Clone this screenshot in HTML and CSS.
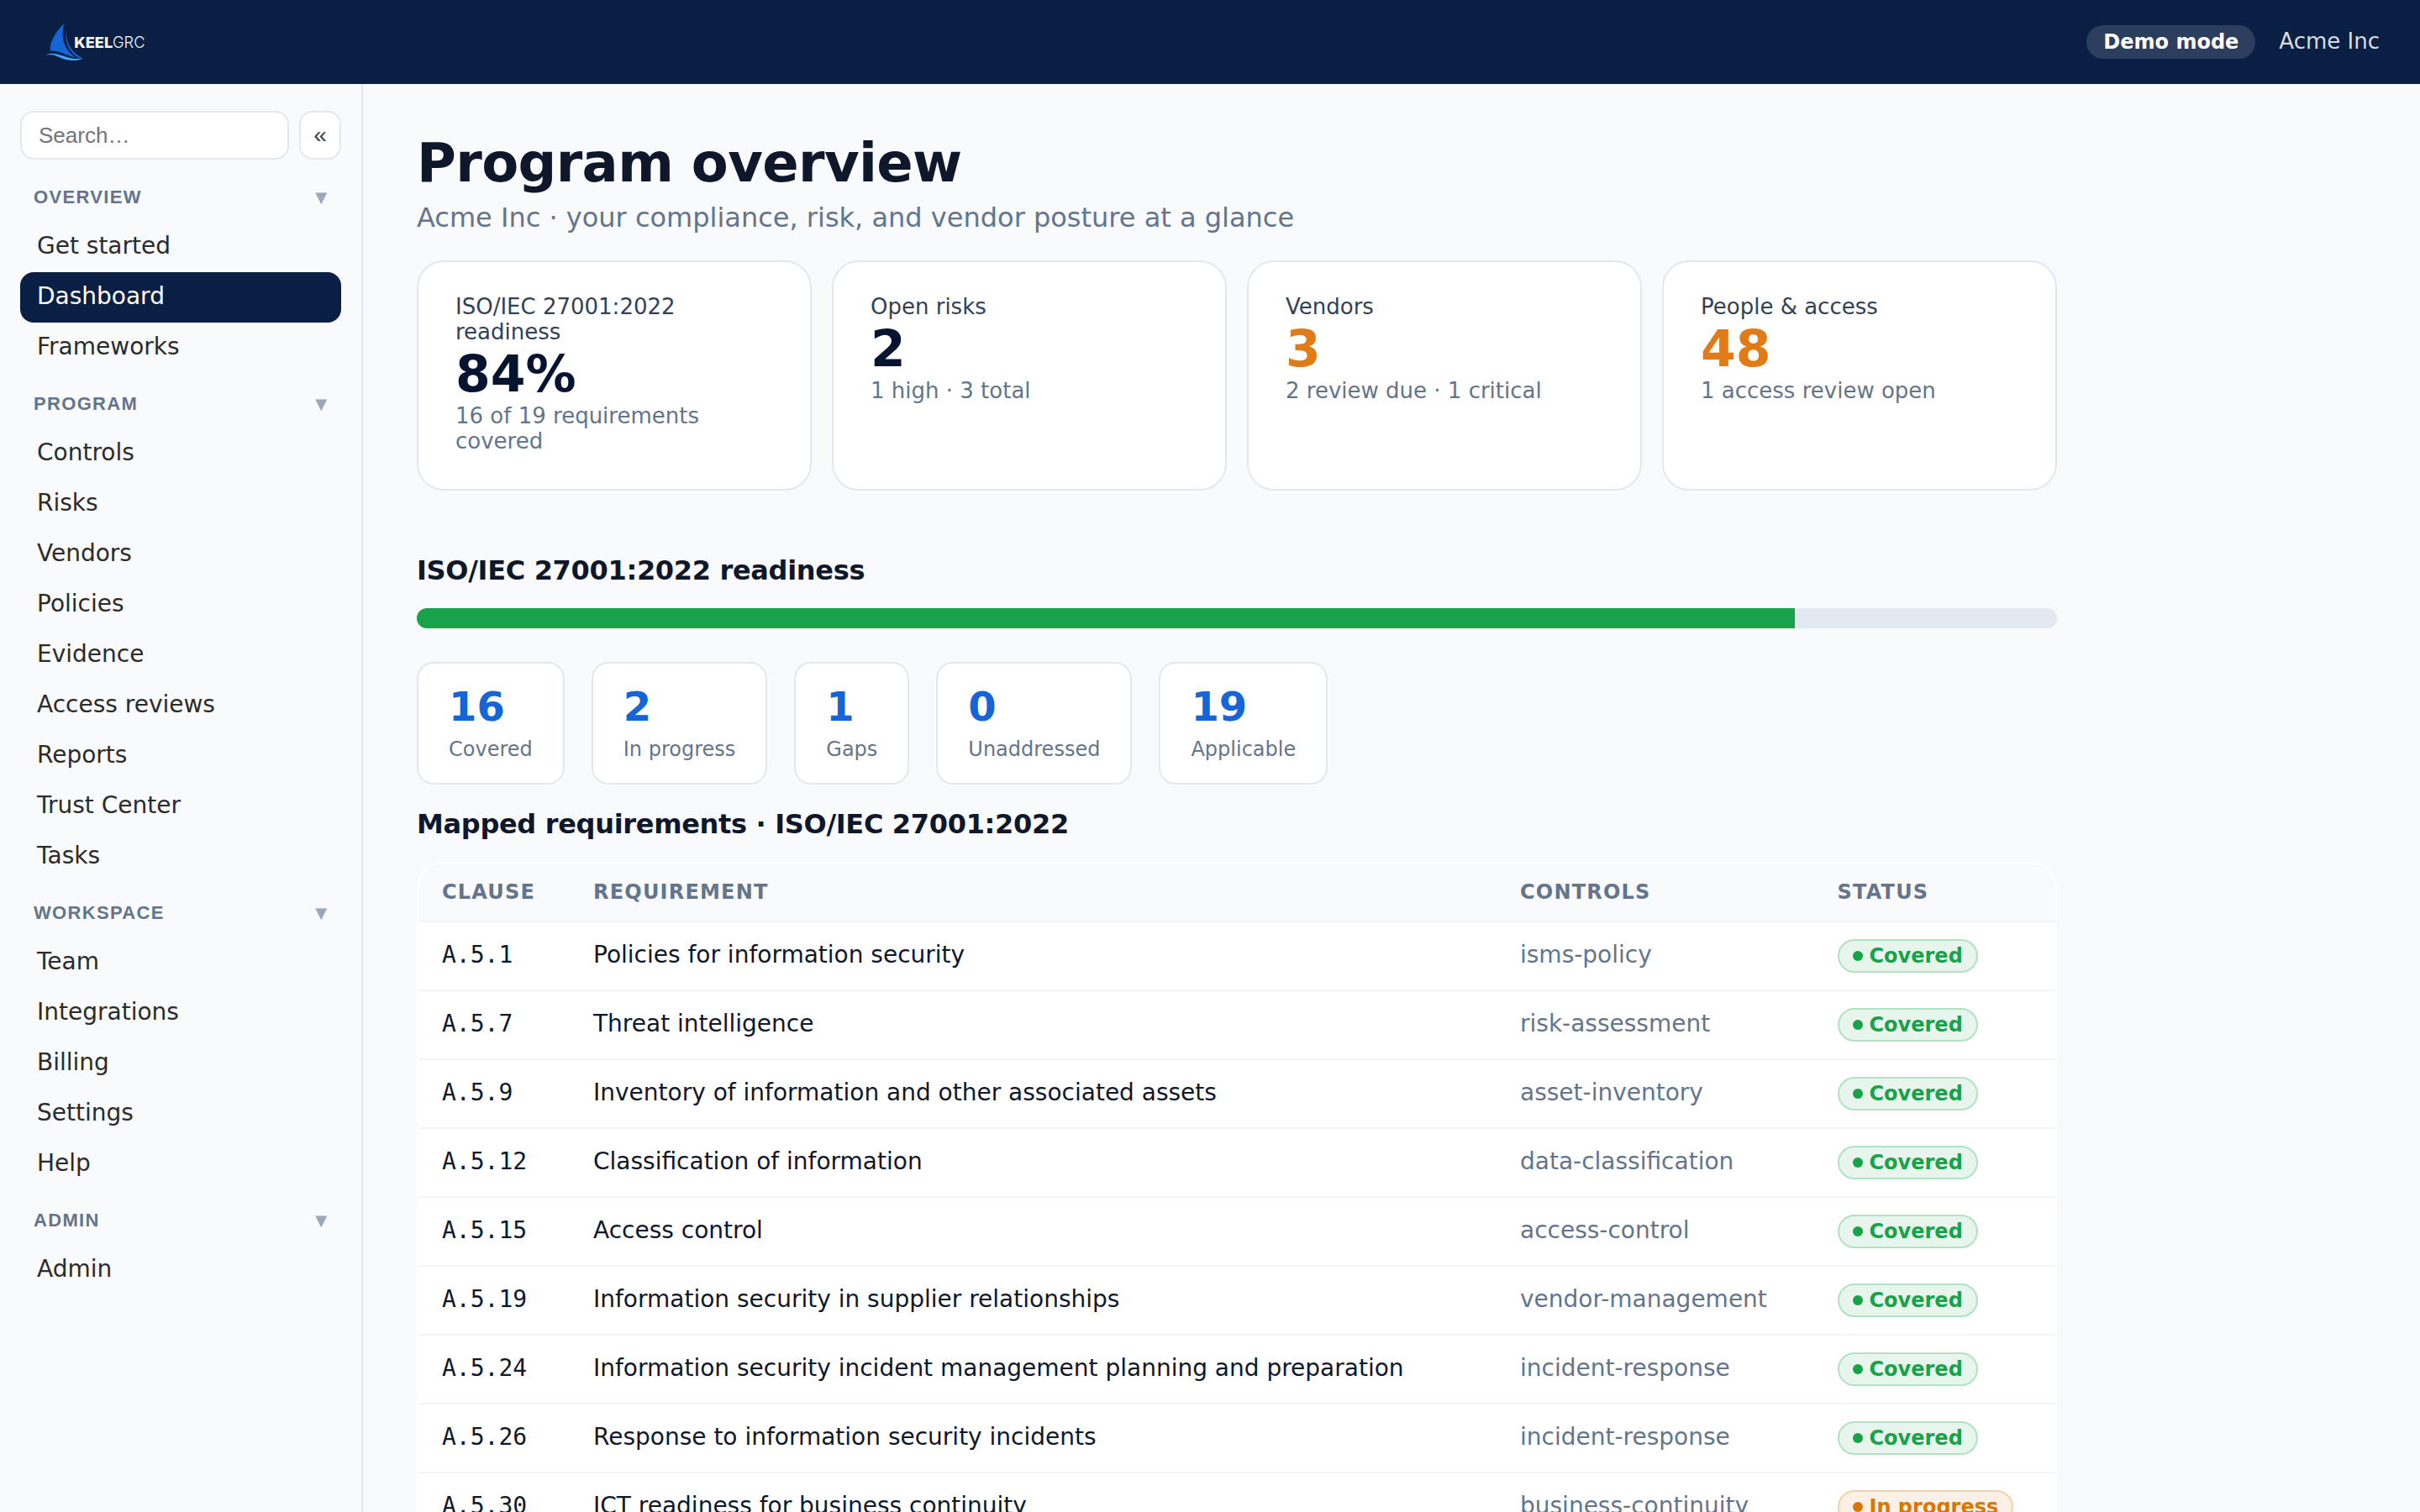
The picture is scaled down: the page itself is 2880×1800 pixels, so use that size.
FILE: index.html
```html
<!DOCTYPE html>
<html lang="en">
<head>
    <meta charset="UTF-8">
    <meta name="viewport" content="width=device-width, initial-scale=1.0">
    <title>Program overview - KeelGRC</title>
    <link rel="stylesheet" href="styles.css">
</head>
<body>
    <header class="topbar">
        <svg class="logo" width="124" height="50" viewBox="0 0 124 50" role="img" aria-label="KeelGRC">
            <path fill="#1565d8" d="M24.5 3 C14 13 7.500 24 7.500 35.500 C18 34.500 27 41 37.500 43.300 C25 34 19.500 21 24.500 3 Z"/>
            <path fill="#1565d8" d="M27 11 C26 25 32 37 46.500 44.500 L40.500 43.500 C29 35 24.500 24 27 11 Z"/>
            <path fill="#42a5f5" d="M2 40.500 C17 34 25 47 46.500 44.500 C39 49 25 47 17 42.500 C12 39.500 7 39.500 2 40.500 Z"/>
            <text class="logo-bold" x="36.200" y="31.500" textLength="46" lengthAdjust="spacingAndGlyphs">KEEL</text>
            <text class="logo-light" x="82" y="31.500" textLength="38.500" lengthAdjust="spacingAndGlyphs">GRC</text>
        </svg>
        <div class="topbar-right">
            <span class="demo-badge">Demo mode</span>
            <span class="org-name">Acme Inc</span>
        </div>
    </header>
    <div class="layout">
        <aside class="sidebar">
            <div class="sidebar-top">
                <input type="text" class="search" placeholder="Search…">
                <button class="collapse">«</button>
            </div>
            <nav>
                <button class="nav-title">Overview <span class="caret">▼</span></button>
                <a class="nav-item">Get started</a>
                <a class="nav-item active">Dashboard</a>
                <a class="nav-item">Frameworks</a>

                <button class="nav-title">Program <span class="caret">▼</span></button>
                <a class="nav-item">Controls</a>
                <a class="nav-item">Risks</a>
                <a class="nav-item">Vendors</a>
                <a class="nav-item">Policies</a>
                <a class="nav-item">Evidence</a>
                <a class="nav-item">Access reviews</a>
                <a class="nav-item">Reports</a>
                <a class="nav-item">Trust Center</a>
                <a class="nav-item">Tasks</a>

                <button class="nav-title">Workspace <span class="caret">▼</span></button>
                <a class="nav-item">Team</a>
                <a class="nav-item">Integrations</a>
                <a class="nav-item">Billing</a>
                <a class="nav-item">Settings</a>
                <a class="nav-item">Help</a>

                <button class="nav-title">Admin <span class="caret">▼</span></button>
                <a class="nav-item">Admin</a>
            </nav>
        </aside>
        <main class="main">
            <h1>Program overview</h1>
            <p class="subtitle">Acme Inc · your compliance, risk, and vendor posture at a glance</p>

            <div class="cards">
                <div class="card">
                    <div class="card-label">ISO/IEC 27001:2022 readiness</div>
                    <div class="card-value">84%</div>
                    <div class="card-note">16 of 19 requirements covered</div>
                </div>
                <div class="card">
                    <div class="card-label">Open risks</div>
                    <div class="card-value">2</div>
                    <div class="card-note">1 high · 3 total</div>
                </div>
                <div class="card">
                    <div class="card-label">Vendors</div>
                    <div class="card-value warn">3</div>
                    <div class="card-note">2 review due · 1 critical</div>
                </div>
                <div class="card">
                    <div class="card-label">People &amp; access</div>
                    <div class="card-value warn">48</div>
                    <div class="card-note">1 access review open</div>
                </div>
            </div>

            <h2 class="readiness-title">ISO/IEC 27001:2022 readiness</h2>
            <div class="progress"><div class="progress-fill" style="width: 84%"></div></div>

            <div class="stats">
                <div class="stat"><div class="stat-value">16</div><div class="stat-label">Covered</div></div>
                <div class="stat"><div class="stat-value">2</div><div class="stat-label">In progress</div></div>
                <div class="stat"><div class="stat-value">1</div><div class="stat-label">Gaps</div></div>
                <div class="stat"><div class="stat-value">0</div><div class="stat-label">Unaddressed</div></div>
                <div class="stat"><div class="stat-value">19</div><div class="stat-label">Applicable</div></div>
            </div>

            <h2>Mapped requirements · ISO/IEC 27001:2022</h2>
            <div class="table-wrap">
                <table>
                    <thead>
                        <tr>
                            <th class="col-clause">Clause</th>
                            <th>Requirement</th>
                            <th class="col-controls">Controls</th>
                            <th class="col-status">Status</th>
                        </tr>
                    </thead>
                    <tbody>
                        <tr>
                            <td class="clause">A.5.1</td>
                            <td>Policies for information security</td>
                            <td class="muted">isms-policy</td>
                            <td><span class="badge covered">Covered</span></td>
                        </tr>
                        <tr>
                            <td class="clause">A.5.7</td>
                            <td>Threat intelligence</td>
                            <td class="muted">risk-assessment</td>
                            <td><span class="badge covered">Covered</span></td>
                        </tr>
                        <tr>
                            <td class="clause">A.5.9</td>
                            <td>Inventory of information and other associated assets</td>
                            <td class="muted">asset-inventory</td>
                            <td><span class="badge covered">Covered</span></td>
                        </tr>
                        <tr>
                            <td class="clause">A.5.12</td>
                            <td>Classification of information</td>
                            <td class="muted">data-classification</td>
                            <td><span class="badge covered">Covered</span></td>
                        </tr>
                        <tr>
                            <td class="clause">A.5.15</td>
                            <td>Access control</td>
                            <td class="muted">access-control</td>
                            <td><span class="badge covered">Covered</span></td>
                        </tr>
                        <tr>
                            <td class="clause">A.5.19</td>
                            <td>Information security in supplier relationships</td>
                            <td class="muted">vendor-management</td>
                            <td><span class="badge covered">Covered</span></td>
                        </tr>
                        <tr>
                            <td class="clause">A.5.24</td>
                            <td>Information security incident management planning and preparation</td>
                            <td class="muted">incident-response</td>
                            <td><span class="badge covered">Covered</span></td>
                        </tr>
                        <tr>
                            <td class="clause">A.5.26</td>
                            <td>Response to information security incidents</td>
                            <td class="muted">incident-response</td>
                            <td><span class="badge covered">Covered</span></td>
                        </tr>
                        <tr>
                            <td class="clause">A.5.30</td>
                            <td>ICT readiness for business continuity</td>
                            <td class="muted">business-continuity</td>
                            <td><span class="badge progressing">In progress</span></td>
                        </tr>
                    </tbody>
                </table>
            </div>
        </main>
    </div>
</body>
</html>
```
FILE: styles.css
```css
* {
    box-sizing: border-box;
}
body {
    margin: 0;
    height: 100vh;
    overflow: hidden;
    display: flex;
    flex-direction: column;
    font-family: "DejaVu Sans", sans-serif;
    font-size: 28px;
    line-height: 32px;
    color: #0f172a;
    background: #f9fafc;
}

/* top bar */
.topbar {
    flex: none;
    height: 100px;
    padding: 0 48px 0 52px;
    display: flex;
    align-items: center;
    justify-content: space-between;
    background: #0a1f44;
}
.logo-bold, .logo-light {
    font-family: Inter, sans-serif;
    font-size: 18px;
    fill: #f4f6fa;
}
.logo-bold {
    font-weight: 800;
}
.logo-light {
    font-weight: 300;
}
.topbar-right {
    display: flex;
    align-items: center;
    gap: 28px;
}
.demo-badge {
    padding: 6px 20px;
    border-radius: 20px;
    background: rgba(255, 255, 255, 0.14);
    color: #fff;
    font-size: 24px;
    font-weight: bold;
    line-height: 28px;
}
.org-name {
    color: rgba(255, 255, 255, 0.85);
    font-size: 26px;
    line-height: 30px;
    padding-bottom: 2px;
}

.layout {
    flex: 1;
    min-height: 0;
    display: flex;
}

/* sidebar */
.sidebar {
    flex: none;
    width: 432px;
    padding: 32px 24px;
    border-right: 2px solid #e2e8f0;
}
.sidebar-top {
    display: flex;
    gap: 12px;
    margin-bottom: 8px;
}
.search {
    flex: 1;
    min-width: 0;
    height: 58px;
    padding: 0 20px;
    border: 2px solid #e2e8f0;
    border-radius: 16px;
    background: #fff;
    font-family: "Liberation Sans", sans-serif;
    font-size: 26px;
}
.collapse {
    width: 50px;
    height: 58px;
    padding: 0;
    border: 2px solid #e2e8f0;
    border-radius: 16px;
    background: #fff;
    color: #334155;
    font-family: "Liberation Sans", sans-serif;
    font-size: 28px;
}
.nav-title {
    display: flex;
    justify-content: space-between;
    width: 100%;
    padding: 24px 17px 16px 16px;
    border: none;
    background: none;
    color: #64748b;
    font-family: "Liberation Sans", sans-serif;
    font-size: 22px;
    font-weight: bold;
    line-height: 26px;
    letter-spacing: 1.32px;
    text-transform: uppercase;
}
.caret {
    color: #9ba8b9;
    font-family: "DejaVu Sans", sans-serif;
    font-size: 18px;
    font-weight: normal;
    letter-spacing: 0;
}
.nav-item {
    display: block;
    padding: 13px 20px 15px;
    border-radius: 16px;
    color: #2b2b2b;
}
.nav-item.active {
    background: #0a1f44;
    color: #fff;
}

/* main */
.main {
    flex: 1;
    max-width: 2080px;
    padding: 56px 64px;
}
h1 {
    margin: 0 0 8px;
    font-size: 64px;
    line-height: 76px;
    letter-spacing: -0.64px;
}
h2 {
    margin: 28px 0 26px;
    font-size: 32px;
    line-height: 38px;
    letter-spacing: -0.32px;
}
h2.readiness-title {
    margin-top: 76px;
}
.subtitle {
    margin: 0 0 32px;
    font-size: 32px;
    line-height: 38px;
    color: #64748b;
}

.cards {
    display: grid;
    grid-template-columns: repeat(4, 1fr);
    gap: 24px;
}
.card {
    padding: 38px 44px 42px;
    border: 2px solid #e2e8f0;
    border-radius: 32px;
    background: #fff;
    font-size: 26px;
    line-height: 30px;
}
.card-label {
    color: #334155;
}
.card-value {
    font-size: 60px;
    font-weight: bold;
    line-height: 70px;
    color: #06142f;
}
.card-value.warn {
    color: #e07b17;
}
.card-note {
    color: #64748b;
}

.progress {
    height: 24px;
    border-radius: 12px;
    overflow: hidden;
    background: #e2e8f0;
}
.progress-fill {
    height: 100%;
    background: #18a34a;
}

.stats {
    display: flex;
    gap: 32px;
    margin-top: 40px;
}
.stat {
    padding: 24px 36px 26px;
    border: 2px solid #e2e8f0;
    border-radius: 20px;
    background: #fff;
}
.stat-value {
    margin-bottom: 10px;
    font-size: 48px;
    font-weight: bold;
    line-height: 54px;
    color: #1565d8;
}
.stat-label {
    font-size: 24px;
    line-height: 28px;
    color: #64748b;
}

/* requirements table */
.table-wrap {
    border: 2px solid #fff;
    border-radius: 32px;
    overflow: hidden;
    background: #fff;
}
table {
    width: 100%;
    table-layout: fixed;
    border-spacing: 0;
}
th, td {
    padding: 20px 28px;
    border-bottom: 2px solid #f1f5f9;
    text-align: left;
    vertical-align: baseline;
    white-space: nowrap;
}
th {
    background: #f9fafc;
    color: #64748b;
    font-size: 24px;
    line-height: 28px;
    letter-spacing: 1.2px;
    text-transform: uppercase;
}
.col-clause {
    width: 180px;
}
.col-controls {
    width: 377.5px;
}
.col-status {
    width: 287.5px;
}
.clause {
    font-family: "DejaVu Sans Mono", monospace;
}
.muted {
    color: #64748b;
}
.badge {
    display: inline-block;
    padding: 4px 16px;
    border: 2px solid;
    border-radius: 20px;
    font-size: 24px;
    font-weight: bold;
    line-height: 28px;
}
.badge::before {
    content: "";
    display: inline-block;
    width: 12px;
    height: 12px;
    margin-right: 8px;
    border-radius: 50%;
    background: currentColor;
    vertical-align: 2px;
}
.badge.covered {
    color: #18a34a;
    background: #e7f5ec;
    border-color: #b2e1c3;
}
.badge.progressing {
    color: #d97706;
    background: #fbf0e6;
    border-color: #f3d1a9;
}
```
